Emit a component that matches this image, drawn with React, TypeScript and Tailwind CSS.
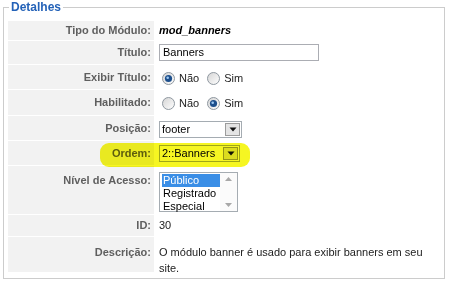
const Radio = ({ checked }: { checked?: boolean }) => (
  <svg width="13" height="13" viewBox="0 0 13 13" className="shrink-0">
    <defs>
      <linearGradient id={checked ? "rg-on" : "rg-off"} x1="0" y1="0" x2="1" y2="1">
        <stop offset="0" stopColor="#d4d4d4" />
        <stop offset="1" stopColor="#ffffff" />
      </linearGradient>
    </defs>
    <circle cx="6.5" cy="6.5" r="6" fill={`url(#${checked ? "rg-on" : "rg-off"})`} stroke="#8f98a0" strokeWidth="1" />
    {checked && (
      <>
        <circle cx="6.5" cy="6.5" r="3.6" fill="#1d4f8c" />
        <circle cx="5.7" cy="5.7" r="1.3" fill="#9cc8f2" />
      </>
    )}
  </svg>
);

const DropButton = () => (
  <div className="w-[15px] m-px flex items-center justify-center bg-[#e4e4e4] border border-[#9c9c9c]">
    <svg width="8" height="5" viewBox="0 0 8 5">
      <path d="M0.5 0.5 L7.5 0.5 L4 4.5 Z" fill="#111" />
    </svg>
  </div>
);

const Select = ({ value, width }: { value: string; width: string }) => (
  <div className={`${width} h-[17px] flex border border-[#a5acb2] bg-white`}>
    <span className="flex-1 pl-[2px] leading-[15px] text-black">{value}</span>
    <DropButton />
  </div>
);

const Label = ({ children, top }: { children: string; top?: boolean }) => (
  <div
    className={`bg-[#f2f2f2] flex justify-end pr-[3px] font-bold text-[#5f5f5f] ${
      top ? "items-start pt-[6px]" : "items-center"
    }`}
  >
    {children}
  </div>
);

export default function App() {
  return (
    <div className="relative w-[452px] h-[286px] bg-white font-['Liberation_Sans',Arial,sans-serif] text-[11px] text-[#222]">
      <fieldset className="ml-[3px] w-[442px] border border-[#cccccc] pl-[4px] pr-[4px] pt-[6px] pb-[6px]">
        <legend className="px-[2px] ml-px text-[12px] leading-[15px] font-bold text-[#2462b8]">Detalhes</legend>
        <div className="grid grid-cols-[146px_1fr] gap-px">
          <Label>Tipo do Módulo:</Label>
          <div className="h-[19px] flex items-center pl-[4px] font-bold italic text-black">mod_banners</div>

          <Label>Título:</Label>
          <div className="h-[23px] flex items-center pl-[4px]">
            <div className="w-[160px] h-[17px] border border-[#abadb3] pl-[3px] leading-[15px] text-black">Banners</div>
          </div>

          <Label>Exibir Título:</Label>
          <div className="h-[24px] flex items-center pl-[7px] pt-[2px] gap-[4px]">
            <Radio checked />
            <span className="mr-[4px]">Não</span>
            <Radio />
            <span>Sim</span>
          </div>

          <Label>Habilitado:</Label>
          <div className="h-[25px] flex items-center pl-[7px] pt-[2px] gap-[4px]">
            <Radio />
            <span className="mr-[4px]">Não</span>
            <Radio checked />
            <span>Sim</span>
          </div>

          <Label>Posição:</Label>
          <div className="h-[24px] flex items-center pl-[4px] pt-[2px]">
            <Select value="footer" width="w-[83px]" />
          </div>

          <Label>Ordem:</Label>
          <div className="h-[24px] flex items-center pl-[4px]">
            <Select value="2::Banners" width="w-[81px]" />
          </div>

          <Label top>Nível de Acesso:</Label>
          <div className="h-[48px] pl-[4px] pt-[6px]">
            <div className="w-[79px] h-[40px] flex border border-[#a5acb2] bg-white leading-[13px] text-black">
              <div className="flex-1 flex flex-col pl-[2px] pt-px">
                <span className="bg-[#3a8ee6] text-white pl-[1px]">Público</span>
                <span className="pl-[1px]">Registrado</span>
                <span className="pl-[1px]">Especial</span>
              </div>
              <div className="w-[17px] flex flex-col justify-between items-center py-[4px] bg-[#fbfbfb]">
                <svg width="7" height="4" viewBox="0 0 7 4">
                  <path d="M0 4 L3.5 0 L7 4 Z" fill="#a8a8a8" />
                </svg>
                <svg width="7" height="4" viewBox="0 0 7 4">
                  <path d="M0 0 L7 0 L3.5 4 Z" fill="#a8a8a8" />
                </svg>
              </div>
            </div>
          </div>

          <Label>ID:</Label>
          <div className="h-[21px] flex items-center pl-[4px]">30</div>

          <div className="bg-[#f2f2f2] flex justify-end items-start pr-[3px] pt-[7px] leading-[16px] font-bold text-[#5f5f5f]">
            Descrição:
          </div>
          <div className="h-[35px] pl-[4px] pt-[7px] leading-[16px]">
            <p className="w-[272px]">O módulo banner é usado para exibir banners em seu site.</p>
          </div>
        </div>
      </fieldset>
      <div className="absolute left-[100px] top-[143px] w-[150px] h-[24px] rounded-[9px] bg-[#f6f622] mix-blend-multiply pointer-events-none" />
    </div>
  );
}
